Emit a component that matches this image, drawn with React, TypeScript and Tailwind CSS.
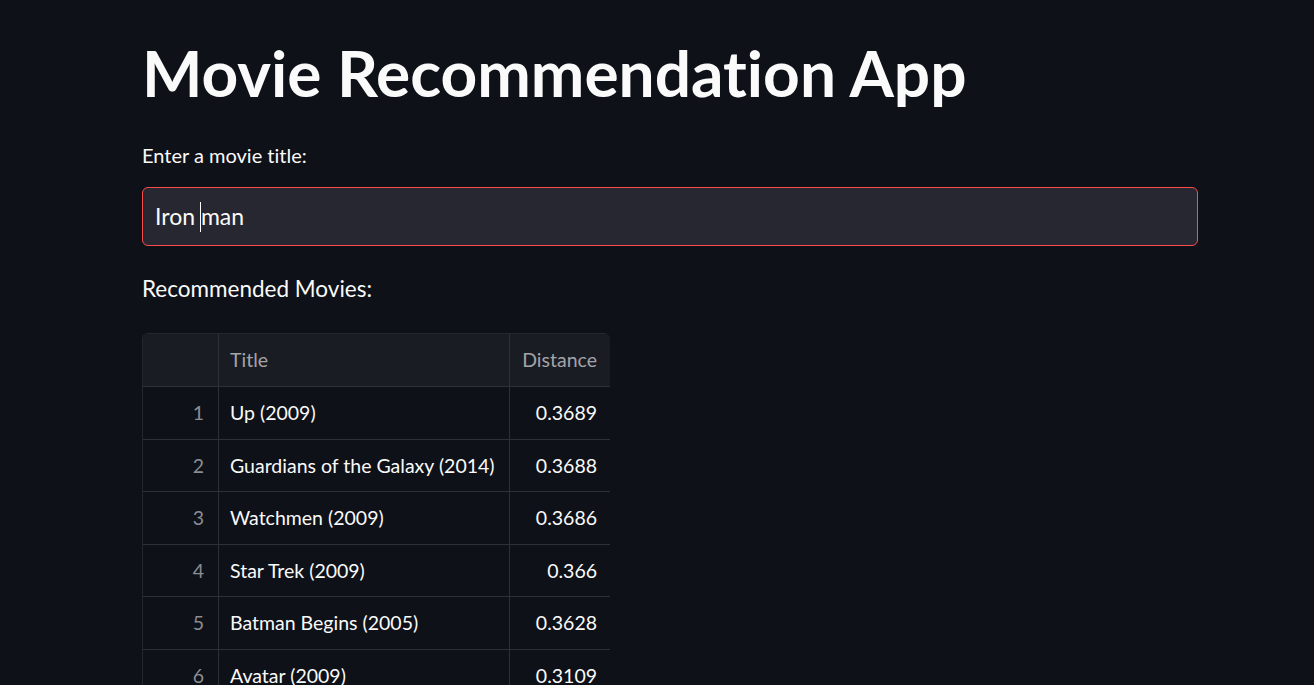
import React from "react";

const rows = [
  { i: 1, title: "Up (2009)", d: "0.3689" },
  { i: 2, title: "Guardians of the Galaxy (2014)", d: "0.3688" },
  { i: 3, title: "Watchmen (2009)", d: "0.3686" },
  { i: 4, title: "Star Trek (2009)", d: "0.366" },
  { i: 5, title: "Batman Begins (2005)", d: "0.3628" },
  { i: 6, title: "Avatar (2009)", d: "0.3109" },
];

export default function App() {
  return (
    <div
      className="min-h-screen bg-[#0e1117] text-[#fafafa] [font-variant-ligatures:none]"
      style={{ fontFamily: '"Lato", "Noto Sans", sans-serif' }}
    >
      <div className="w-[1056px] ml-[142px] pt-[37px] flex flex-col">
        {/* title */}
        <h1 className="text-[64px] leading-[72px] h-[72px] font-bold whitespace-nowrap">
          Movie Recommendation App
        </h1>

        {/* label */}
        <div className="mt-[34px] h-[24px] text-[20px] leading-[24px]">
          Enter a movie title:
        </div>

        {/* input */}
        <div className="mt-[20px] h-[59px] rounded-[6px] border border-[#ff4b4b] bg-[#262730] flex items-center px-[12px] text-[23px]">
          <span className="whitespace-pre">Iron </span>
          <span className="w-px h-[30px] bg-[#fafafa] -ml-px" />
          <span>man</span>
        </div>

        {/* subheader */}
        <div className="mt-[28px] h-[30px] text-[22.5px] leading-[30px]">
          Recommended Movies:
        </div>

        {/* table */}
        <div className="mt-[29px] w-[468px] rounded-t-[6px] border-l border-t border-[#25272e] overflow-hidden text-[19.5px]">
          <div className="flex h-[53px] bg-[#1a1c24] border-b border-[#2e3037] text-[#a3a4a8]">
            <div className="w-[76px] border-r border-[#2e3037]" />
            <div className="w-[291px] border-r border-[#2e3037] flex items-center pl-[11px]">
              Title
            </div>
            <div className="flex-1 flex items-center justify-end pr-[13px]">
              Distance
            </div>
          </div>
          {rows.map((r) => (
            <div
              key={r.i}
              className="flex h-[52.5px] border-b border-[#2e3037]"
            >
              <div className="w-[76px] border-r border-[#2e3037] flex items-center justify-end pr-[14px] text-[#8b8d93]">
                {r.i}
              </div>
              <div className="w-[291px] border-r border-[#2e3037] flex items-center pl-[11px] whitespace-nowrap">
                {r.title}
              </div>
              <div className="flex-1 flex items-center justify-end pr-[13px]">
                {r.d}
              </div>
            </div>
          ))}
        </div>
      </div>
    </div>
  );
}
